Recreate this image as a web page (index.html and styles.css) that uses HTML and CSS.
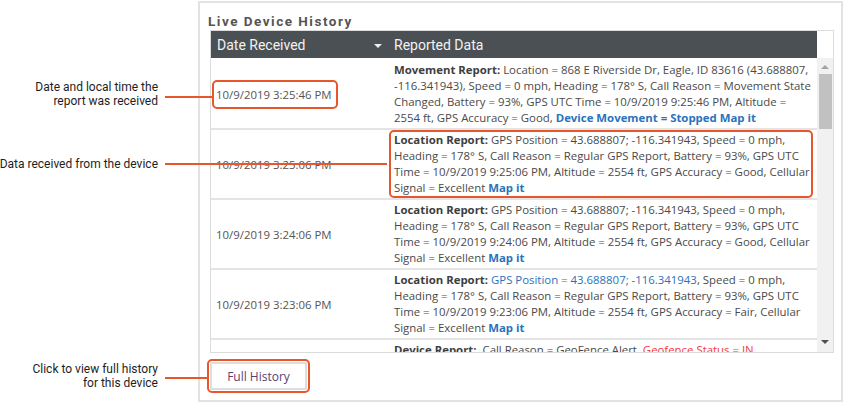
FILE: index.html
```html
<!DOCTYPE html>
<html>
<head>
  <title>Live Device History</title>
  <link rel="stylesheet" href="styles.css">
</head>
<body>
  <div class="page">
    <div class="panel">
      <h2 class="title">Live Device History</h2>
      <div class="grid">
        <div class="head">
          <div class="head-date">Date Received <span class="caret"></span></div>
          <div class="head-data">Reported Data</div>
        </div>
        <div class="head-gap"></div>
        <div class="rows">
          <div class="row">
            <div class="date"><span class="mark">10/9/2019 3:25:46 PM</span></div>
            <div class="data"><div class="box">
              <b>Movement Report:</b> Location = 868 E Riverside Dr, Eagle, ID 83616 (43.688807,<br>
              -116.341943), Speed = 0 mph, Heading = 178° S, Call Reason = Movement State<br>
              Changed, Battery = 93%, GPS UTC Time = 10/9/2019 9:25:46 PM, Altitude =<br>
              2554 ft, GPS Accuracy = Good, <b class="link">Device Movement = Stopped</b> <b class="link">Map it</b>
            </div></div>
          </div>
          <div class="row">
            <div class="date">10/9/2019 3:25:06 PM</div>
            <div class="data"><div class="box marked">
              <b>Location Report:</b> GPS Position = 43.688807; -116.341943, Speed = 0 mph,<br>
              Heading = 178° S, Call Reason = Regular GPS Report, Battery = 93%, GPS UTC<br>
              Time = 10/9/2019 9:25:06 PM, Altitude = 2554 ft, GPS Accuracy = Good, Cellular<br>
              Signal = Excellent <b class="link">Map it</b>
            </div></div>
          </div>
          <div class="row">
            <div class="date">10/9/2019 3:24:06 PM</div>
            <div class="data"><div class="box">
              <b>Location Report:</b> GPS Position = 43.688807; -116.341943, Speed = 0 mph,<br>
              Heading = 178° S, Call Reason = Regular GPS Report, Battery = 93%, GPS UTC<br>
              Time = 10/9/2019 9:24:06 PM, Altitude = 2554 ft, GPS Accuracy = Good, Cellular<br>
              Signal = Excellent <b class="link">Map it</b>
            </div></div>
          </div>
          <div class="row">
            <div class="date">10/9/2019 3:23:06 PM</div>
            <div class="data"><div class="box">
              <b>Location Report:</b> <span class="blue">GPS Position = 43.688807; -116.341943</span>, Speed = 0 mph,<br>
              Heading = 178° S, Call Reason = Regular GPS Report, Battery = 93%, GPS UTC<br>
              Time = 10/9/2019 9:23:06 PM, Altitude = 2554 ft, GPS Accuracy = Fair, Cellular<br>
              Signal = Excellent <b class="link">Map it</b>
            </div></div>
          </div>
          <div class="row">
            <div class="date">10/9/2019 3:22:46 PM</div>
            <div class="data"><div class="box">
              <b>Device Report:</b>&nbsp; Call Reason = GeoFence Alert, <span class="red">Geofence Status = IN</span>
            </div></div>
          </div>
        </div>
        <div class="scrollbar">
          <span class="arrow up"></span>
          <span class="thumb"></span>
          <span class="arrow down"></span>
        </div>
      </div>
      <div class="footer">
        <span class="mark-btn"><button class="history-btn">Full History</button></span>
      </div>
    </div>

    <div class="notes">
      <div class="note note-date">Date and local time the<br>report was received</div>
      <div class="note note-data">Data received from the device</div>
      <div class="note note-btn">Click to view full history<br>for this device</div>
      <svg class="lines" width="847" height="404" viewBox="0 0 847 404">
        <line x1="165" y1="96" x2="212" y2="96"/>
        <line x1="165" y1="163" x2="387" y2="163"/>
        <line x1="165" y1="377" x2="207" y2="377"/>
      </svg>
    </div>
  </div>
</body>
</html>
```

FILE: styles.css
```css
* {
  box-sizing: border-box;
  margin: 0;
  padding: 0;
}

body {
  font-family: "Open Sans", "Noto Sans", sans-serif;
  background-color: #fff;
  width: 847px;
  height: 404px;
  overflow: hidden;
}

.page {
  position: relative;
  width: 847px;
  height: 404px;
}

.panel {
  margin: 1px 0 0 198px;
  width: 645px;
  height: 401px;
  border: 2px solid #e2e2e2;
  padding: 10px 8px 0 8px;
}

.title {
  font-family: Roboto, sans-serif;
  font-size: 13.5px;
  font-weight: 700;
  line-height: 16px;
  letter-spacing: 1.5px;
  color: #555;
  margin-bottom: 1px;
}

.grid {
  margin-left: 2px;
  width: 624px;
  height: 323px;
  border: 1px solid #dcdcdc;
  display: grid;
  grid-template-columns: 1fr 16px;
  grid-template-rows: 27px 1fr;
}

.head {
  display: flex;
  background-color: #4a5053;
  color: #f2f2f2;
  font-family: Roboto, sans-serif;
  font-size: 14px;
  align-items: center;
}

.head-date {
  width: 178px;
  padding-left: 6px;
  display: flex;
  align-items: center;
  justify-content: space-between;
  padding-right: 7px;
}

.caret {
  width: 0;
  height: 0;
  border-left: 4px solid transparent;
  border-right: 4px solid transparent;
  border-top: 4px solid #eee;
  margin-top: 2px;
}

.head-data {
  padding-left: 5px;
}

.rows {
  overflow: hidden;
  font-size: 11.4px;
  color: #4a4a4a;
}

.row {
  display: flex;
  min-height: 70px;
  border-bottom: 2px solid #e4e4e4;
}

.row:first-child {
  min-height: 72px;
}

.date {
  width: 178px;
  flex-shrink: 0;
  display: flex;
  align-items: center;
  padding-left: 5px;
  color: #555;
  white-space: nowrap;
}

.mark {
  border: 2px solid #e8562b;
  border-radius: 5px;
  padding: 5px 4px 5px 2px;
  margin-left: -4px;
  margin-top: 2px;
}

.data {
  flex: 1;
  min-width: 0;
  padding: 0 4px 0 0;
  white-space: nowrap;
}

.row:first-child .data {
  padding-top: 2px;
}

.box {
  border: 2px solid transparent;
  border-radius: 5px;
  padding: 0 3px 0 3px;
  line-height: 16px;
}

.box.marked {
  border-color: #e8562b;
}

.box b {
  color: #3e3e3e;
}

.box .link {
  color: #2a73bb;
}

.blue {
  color: #2a73bb;
}

.red {
  color: #f03b3b;
}

.scrollbar {
  background-color: #f1f1f1;
  display: flex;
  flex-direction: column;
  align-items: center;
  padding: 7px 0 8px;
}

.arrow {
  width: 0;
  height: 0;
  border-left: 4px solid transparent;
  border-right: 4px solid transparent;
}

.arrow.up {
  border-bottom: 4px solid #a3a3a3;
}

.arrow.down {
  border-top: 4px solid #505050;
  margin-top: auto;
}

.thumb {
  width: 13px;
  height: 55px;
  margin-top: 5px;
  background-color: #c1c1c1;
}

.footer {
  padding-top: 6px;
}

.mark-btn {
  display: inline-flex;
  border: 2px solid #e8562b;
  border-radius: 5px;
  padding: 1px;
  margin-left: -1px;
}

.history-btn {
  width: 97px;
  height: 28px;
  border: 2px solid #dedede;
  background-color: #fff;
  color: #5b3f70;
  font-family: "Open Sans", sans-serif;
  font-size: 12px;
}

.notes {
  position: absolute;
  top: 0;
  left: 0;
  width: 847px;
  height: 404px;
  pointer-events: none;
}

.note {
  position: absolute;
  right: 689px;
  font-family: Roboto, sans-serif;
  font-size: 12px;
  line-height: 14px;
  color: #1e1e1e;
  text-align: right;
  white-space: nowrap;
}

.note-date {
  top: 79px;
}

.note-data {
  top: 156px;
}

.note-btn {
  top: 361px;
}

.lines {
  position: absolute;
  top: 0;
  left: 0;
}

.lines line {
  stroke: #e8562b;
  stroke-width: 2;
}
```
